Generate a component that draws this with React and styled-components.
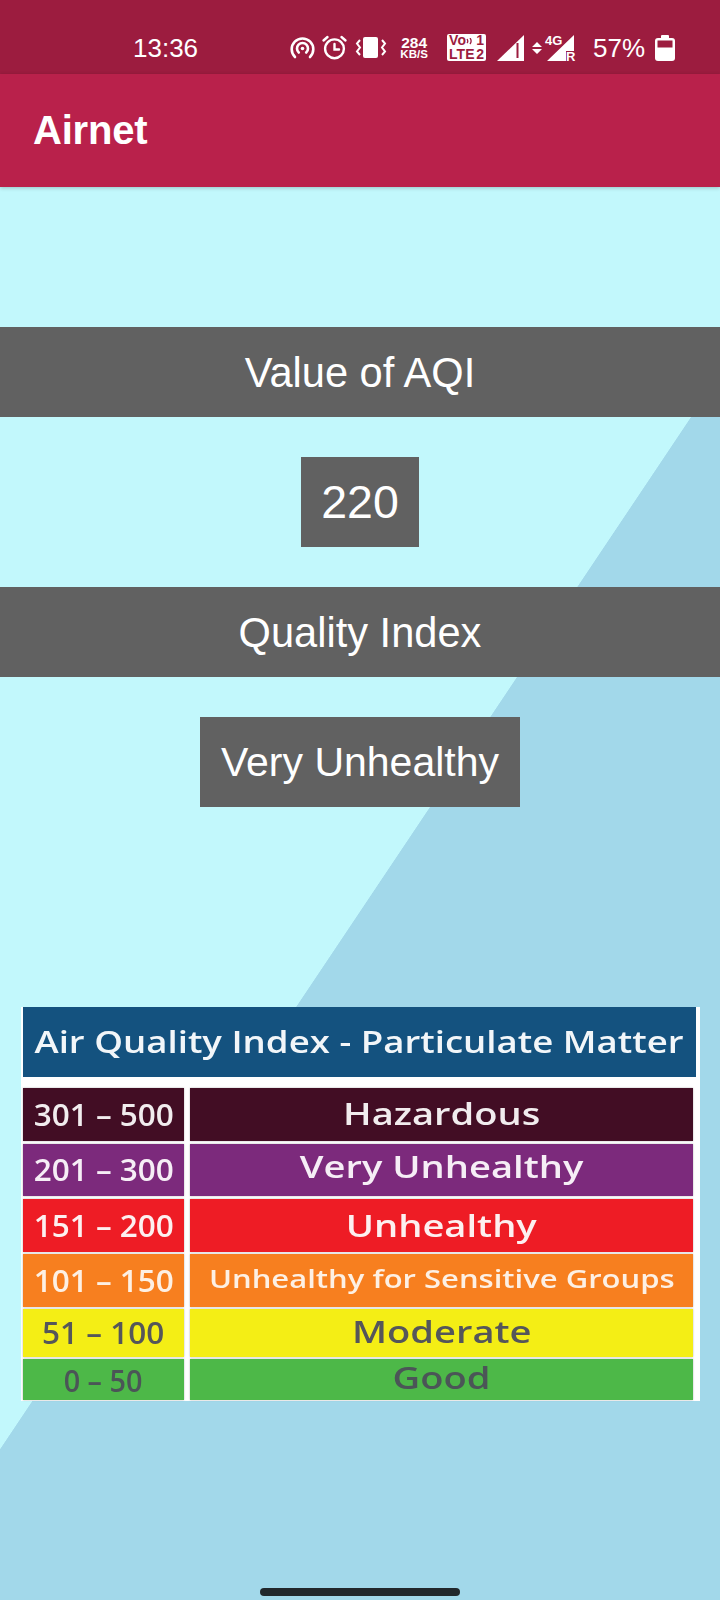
import React from 'react';
import styled, { createGlobalStyle } from 'styled-components';

const Global = createGlobalStyle`
  html, body {
    margin: 0;
    padding: 0;
    background: #a2d8ea;
  }
`;

const Page = styled.div`
  width: 720px;
  height: 1600px;
  overflow: hidden;
  display: flex;
  flex-direction: column;
  font-family: "Liberation Sans", Arial, sans-serif;
  color: #fff;
`;

const StatusBar = styled.div`
  height: 74px;
  flex: none;
  box-sizing: border-box;
  display: flex;
  align-items: center;
  padding: 21px 0 0 133px;
  background: #9c1c3f;
`;

const StatusText = styled.span`
  font-size: 26px;
  line-height: 30px;
  margin-left: ${(p) => p.$gap || 0}px;
`;

const Glyph = styled.svg`
  flex: none;
  display: block;
  overflow: visible;
  margin-left: ${(p) => p.$gap || 0}px;
`;

const Speed = styled.div`
  margin-left: 13px;
  width: 28px;
  display: flex;
  flex-direction: column;
  align-items: center;
  font-weight: 700;
  line-height: 1;
`;

const SpeedValue = styled.span`
  font-size: 15.5px;
  height: 14px;
`;

const SpeedUnit = styled.span`
  font-size: 11.5px;
  white-space: nowrap;
`;

const SimBadge = styled.div`
  margin-left: 19px;
  width: 39px;
  height: 27px;
  box-sizing: border-box;
  padding: 0 2px;
  border-radius: 2px;
  background: #fff;
  color: #9c1c3f;
  font-weight: 700;
  font-size: 14px;
  line-height: 13.5px;
  display: grid;
  grid-template-columns: 1fr auto;
`;

const AppBar = styled.header`
  height: 113px;
  flex: none;
  position: relative;
  z-index: 1;
  display: flex;
  align-items: center;
  padding-left: 33px;
  background: #b9214b;
  box-shadow: 0 1px 4px rgba(0, 0, 0, 0.22);
`;

const AppTitle = styled.h1`
  margin: 0;
  font-size: 40px;
  font-weight: 700;
  letter-spacing: -0.2px;
`;

const Body = styled.main`
  flex: 1;
  display: flex;
  flex-direction: column;
  align-items: center;
  padding-top: 140px;
  background: linear-gradient(123.8deg, #c2f8fc 50.7%, #a2d8ea 50.75%);
`;

const Banner = styled.div`
  align-self: stretch;
  height: 90px;
  box-sizing: border-box;
  padding-top: 2px;
  margin-bottom: 40px;
  display: flex;
  align-items: center;
  justify-content: center;
  background: #616161;
  font-size: 41.6px;
`;

const Chip = styled.div`
  height: 90px;
  box-sizing: border-box;
  padding: 0 ${(p) => p.$pad}px;
  margin-bottom: 40px;
  display: flex;
  align-items: center;
  justify-content: center;
  background: #616161;
  font-size: ${(p) => p.$size}px;
`;

const Legend = styled.section`
  align-self: flex-start;
  width: 679px;
  height: 394px;
  margin: 160px 0 0 21px;
  box-sizing: border-box;
  background: #fff;
  padding-left: 2px;
  font-family: "Open Sans", "Liberation Sans", sans-serif;
  font-weight: 600;
  filter: blur(0.5px);
`;

const LegendTitle = styled.div`
  width: 673px;
  height: 70px;
  margin-bottom: 11px;
  display: flex;
  align-items: center;
  justify-content: center;
  background: #14527f;
  color: #f2f6f9;
`;

const Row = styled.div`
  display: grid;
  grid-template-columns: 161px 503px;
  column-gap: 6px;
  height: ${(p) => p.$height}px;
  margin-bottom: ${(p) => p.$gap}px;
`;

const Cell = styled.div`
  display: flex;
  align-items: center;
  justify-content: center;
  background: ${(p) => p.$bg};
  color: ${(p) => p.$fg};
  box-shadow: 0 0 1.5px rgba(70, 70, 70, 0.45);
`;

const Label = styled.span`
  display: inline-block;
  white-space: nowrap;
  font-size: ${(p) => p.$size}px;
  line-height: 1;
  transform: translateY(${(p) => p.$lift || 0}px) scaleX(${(p) => p.$stretch});
`;

const HomeBar = styled.div`
  width: 200px;
  height: 8px;
  flex: none;
  margin-top: 187px;
  border-radius: 4px;
  background: #22282c;
`;

const rows = [
  { range: '301 – 500', name: 'Hazardous', bg: '#420d24', fg: '#f1ecee', h: 53, gap: 3, rs: 1.05, ns: 1.27, size: 30, lift: -1 },
  { range: '201 – 300', name: 'Very Unhealthy', bg: '#7c2a7c', fg: '#f6eef6', h: 52, gap: 3, rs: 1.05, ns: 1.27, size: 30, lift: -3 },
  { range: '151 – 200', name: 'Unhealthy', bg: '#ee1c25', fg: '#fdf0f0', h: 53, gap: 2, rs: 1.05, ns: 1.27, size: 30 },
  { range: '101 – 150', name: 'Unhealthy for Sensitive Groups', bg: '#f77f1f', fg: '#fdf0e4', h: 53, gap: 2, rs: 1.05, ns: 1.24, size: 25, lift: -2 },
  { range: '51 – 100', name: 'Moderate', bg: '#f4ee15', fg: '#55565a', h: 48, gap: 2, rs: 1.05, ns: 1.27, size: 30, lift: -1 },
  { range: '0 – 50', name: 'Good', bg: '#4db848', fg: '#4b5557', h: 41, gap: 0, rs: 0.96, ns: 1.27, size: 30, lift: -2, rangeLift: 1 },
];

const HotspotIcon = () => (
  <Glyph $gap={92} width="25" height="22" viewBox="0 0 25 22" fill="none" stroke="#fff" strokeWidth="2.6" strokeLinecap="round">
    <path d="M5 20a10.8 10.8 0 1 1 15 0" />
    <path d="M8.800 15.500a5.500 5.500 0 1 1 7.400 0" />
    <circle cx="12.5" cy="11.5" r="1.8" fill="#fff" stroke="none" />
  </Glyph>
);

const AlarmIcon = () => (
  <Glyph $gap={7} width="25" height="23" viewBox="0 0 25 23" fill="none" stroke="#fff" strokeWidth="2.4" strokeLinecap="round">
    <circle cx="12.5" cy="12.800" r="9.400" />
    <path d="M12.500 8v5.500H17" />
    <path d="M1.500 4.500L5.500 1M23.500 4.500L19.500 1" />
  </Glyph>
);

const VibrateIcon = () => (
  <Glyph $gap={9} width="31" height="21" viewBox="0 0 31 21">
    <rect x="7" y="0" width="15" height="21" rx="2" fill="#fff" />
    <path d="M4 3L1 6.500l3 4-3 4 3 3.500M26 3l3 3.500-3 4 3 4-3 3.500" fill="none" stroke="#fff" strokeWidth="2" />
  </Glyph>
);

const WavesIcon = () => (
  <svg width="8" height="7" viewBox="0 0 8 7" fill="none" stroke="#9c1c3f" strokeWidth="1.3">
    <path d="M1 1c1 1.500 1 3 0 4M4 0c1.500 2 1.500 4 0 6" />
  </svg>
);

const SignalIcon = () => (
  <Glyph $gap={11} width="27" height="26" viewBox="0 0 27 26">
    <path d="M0 26L27 0v26z" fill="#fff" />
    <rect x="19.500" y="8" width="2" height="15" fill="#9c1c3f" />
  </Glyph>
);

const ArrowsIcon = () => (
  <Glyph $gap={8} width="10" height="12" viewBox="0 0 10 12">
    <path d="M5 0l5 5H0zM0 7h10l-5 5z" fill="#fff" />
  </Glyph>
);

const DataIcon = () => (
  <Glyph $gap={3} width="30" height="28" viewBox="0 0 30 28">
    <path d="M2 27L29 1v16h-8v10z" fill="#fff" />
    <text x="0" y="11" fontFamily="Liberation Sans" fontWeight="700" fontSize="13" fill="#fff">4G</text>
    <text x="21" y="27" fontFamily="Liberation Sans" fontWeight="700" fontSize="13" fill="#fff">R</text>
  </Glyph>
);

const BatteryIcon = () => (
  <Glyph $gap={10} width="20" height="26" viewBox="0 0 20 26">
    <rect x="6" y="0" width="8" height="4" rx="1" fill="#fff" />
    <rect x="0" y="3" width="20" height="23" rx="3" fill="#fff" />
    <rect x="2.500" y="5.500" width="15" height="7" fill="#9c1c3f" />
  </Glyph>
);

export default function App() {
  return (
    <Page>
      <Global />
      <StatusBar>
        <StatusText>13:36</StatusText>
        <HotspotIcon />
        <AlarmIcon />
        <VibrateIcon />
        <Speed>
          <SpeedValue>284</SpeedValue>
          <SpeedUnit>KB/S</SpeedUnit>
        </Speed>
        <SimBadge>
          <span>Vo<WavesIcon /></span>
          <span>1</span>
          <span>LTE</span>
          <span>2</span>
        </SimBadge>
        <SignalIcon />
        <ArrowsIcon />
        <DataIcon />
        <StatusText $gap={18}>57%</StatusText>
        <BatteryIcon />
      </StatusBar>
      <AppBar>
        <AppTitle>Airnet</AppTitle>
      </AppBar>
      <Body>
        <Banner>Value of AQI</Banner>
        <Chip $size={46.5} $pad={20}>220</Chip>
        <Banner>Quality Index</Banner>
        <Chip $size={41} $pad={21}>Very Unhealthy</Chip>
        <Legend>
          <LegendTitle>
            <Label $size={30} $stretch={1.22}>Air Quality Index - Particulate Matter</Label>
          </LegendTitle>
          {rows.map((row) => (
            <Row key={row.range} $height={row.h} $gap={row.gap}>
              <Cell $bg={row.bg} $fg={row.fg}>
                <Label $size={30} $stretch={row.rs} $lift={row.rangeLift}>{row.range}</Label>
              </Cell>
              <Cell $bg={row.bg} $fg={row.fg}>
                <Label $size={row.size} $stretch={row.ns} $lift={row.lift}>{row.name}</Label>
              </Cell>
            </Row>
          ))}
        </Legend>
        <HomeBar />
      </Body>
    </Page>
  );
}
